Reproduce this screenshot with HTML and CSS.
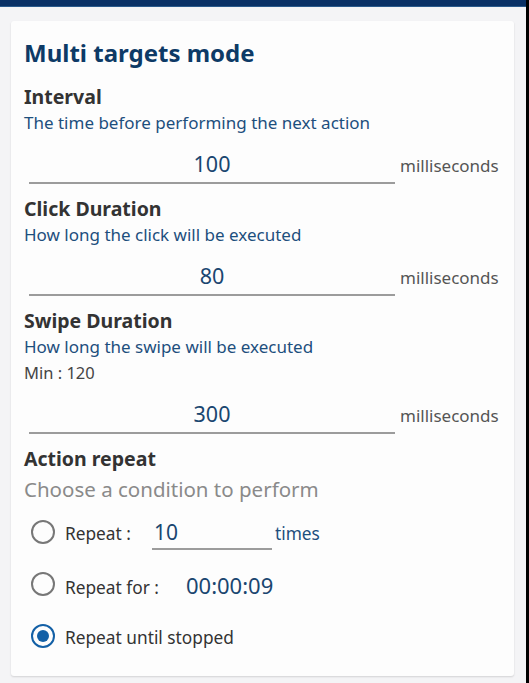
FILE: index.html
```html
<!DOCTYPE html>
<html lang="en">
<head>
<meta charset="utf-8">
<title>Multi targets mode</title>
<link rel="stylesheet" href="styles.css">
</head>
<body>
<div class="screen">
  <main class="page">
    <div class="topbar"></div>
    <section class="card">
      <h1 class="title">Multi targets mode</h1>

      <h2 class="heading">Interval</h2>
      <p class="sub">The time before performing the next action</p>
      <div class="field">
        <div class="input">100</div>
        <span class="unit">milliseconds</span>
      </div>

      <h2 class="heading">Click Duration</h2>
      <p class="sub">How long the click will be executed</p>
      <div class="field">
        <div class="input">80</div>
        <span class="unit">milliseconds</span>
      </div>

      <h2 class="heading">Swipe Duration</h2>
      <p class="sub">How long the swipe will be executed</p>
      <p class="min">Min : 120</p>
      <div class="field">
        <div class="input">300</div>
        <span class="unit">milliseconds</span>
      </div>

      <h2 class="heading">Action repeat</h2>
      <p class="hint">Choose a condition to perform</p>

      <div class="options">
        <div class="option">
          <span class="radio"></span>
          <div class="opt">
            <span class="label">Repeat :</span>
            <span class="count">10</span>
            <span class="times">times</span>
          </div>
        </div>
        <div class="option">
          <span class="radio"></span>
          <div class="opt">
            <span class="label">Repeat for :</span>
            <span class="clock">00:00:09</span>
          </div>
        </div>
        <div class="option">
          <span class="radio checked"></span>
          <div class="opt">
            <span class="label">Repeat until stopped</span>
          </div>
        </div>
      </div>
    </section>
  </main>
  <div class="edge"></div>
</div>
</body>
</html>
```

FILE: styles.css
```css
* { box-sizing: border-box; }
html, body { margin: 0; padding: 0; }
body {
  font-family: "Noto Sans", "Open Sans", sans-serif;
  background: #f4f4f6;
  width: 529px;
  height: 683px;
  overflow: hidden;
}
.screen { display: flex; height: 683px; }
.page { flex: 1; min-width: 0; }
.edge { width: 3px; background: #000; }
.topbar { height: 7px; background: #0a3166; border-bottom: 1px solid #2a5a8c; }

.card {
  margin: 14px 12px 0 11px;
  background: #fdfdfd;
  border-radius: 3px;
  box-shadow: 0 1px 2px rgba(0,0,0,0.14);
  padding: 17px 13px 14px 13px;
}
.title {
  margin: 0;
  font-size: 24px;
  line-height: 30px;
  font-weight: 700;
  color: #0d3a66;
}
.heading {
  margin: 12px 0 0 0;
  font-size: 19.5px;
  line-height: 26px;
  font-weight: 700;
  color: #333;
}
.title + .heading { margin-top: 16px; }
.sub {
  margin: 2px 0 0 0;
  font-size: 17px;
  line-height: 22px;
  color: #1d4f7d;
}
.min {
  margin: 5px 0 0 0;
  font-size: 16.5px;
  line-height: 20px;
  color: #444;
}
.field {
  display: flex;
  align-items: baseline;
  margin: 15px 0 0 5px;
}
.min + .field { margin-top: 16px; }
.input {
  width: 366px;
  text-align: center;
  font-size: 21.5px;
  line-height: 30px;
  color: #1a4670;
  padding-bottom: 3px;
  border-bottom: 2px solid #9c9c9c;
}
.unit {
  margin-left: 5px;
  font-size: 17px;
  color: #555;
}
.hint {
  margin: 4px 0 0 0;
  font-size: 20.5px;
  line-height: 26px;
  color: #8a8a8a;
}
.options { margin-top: 4px; }
.option {
  display: flex;
  align-items: center;
  height: 52px;
}
.radio {
  width: 24px;
  height: 24px;
  margin-left: 7px;
  border: 2.5px solid #777;
  border-radius: 50%;
  flex: none;
  display: flex;
  align-items: center;
  justify-content: center;
}
.radio.checked { border-color: #1360a6; }
.radio.checked::after {
  content: "";
  width: 12px;
  height: 12px;
  border-radius: 50%;
  background: #1360a6;
}
.opt {
  display: flex;
  align-items: baseline;
  margin-left: 10px;
  margin-top: 4px;
}
.label {
  font-size: 17.3px;
  line-height: 24px;
  color: #333;
}
.count {
  width: 120px;
  margin-left: 21px;
  padding-left: 2px;
  font-size: 21px;
  line-height: 26px;
  color: #1a4670;
  padding-bottom: 3px;
  border-bottom: 2px solid #9c9c9c;
}
.times {
  margin-left: 3px;
  font-size: 17.3px;
  color: #1d4f7d;
}
.clock {
  margin-left: 27px;
  font-size: 22px;
  line-height: 26px;
  color: #1a4670;
}
```
